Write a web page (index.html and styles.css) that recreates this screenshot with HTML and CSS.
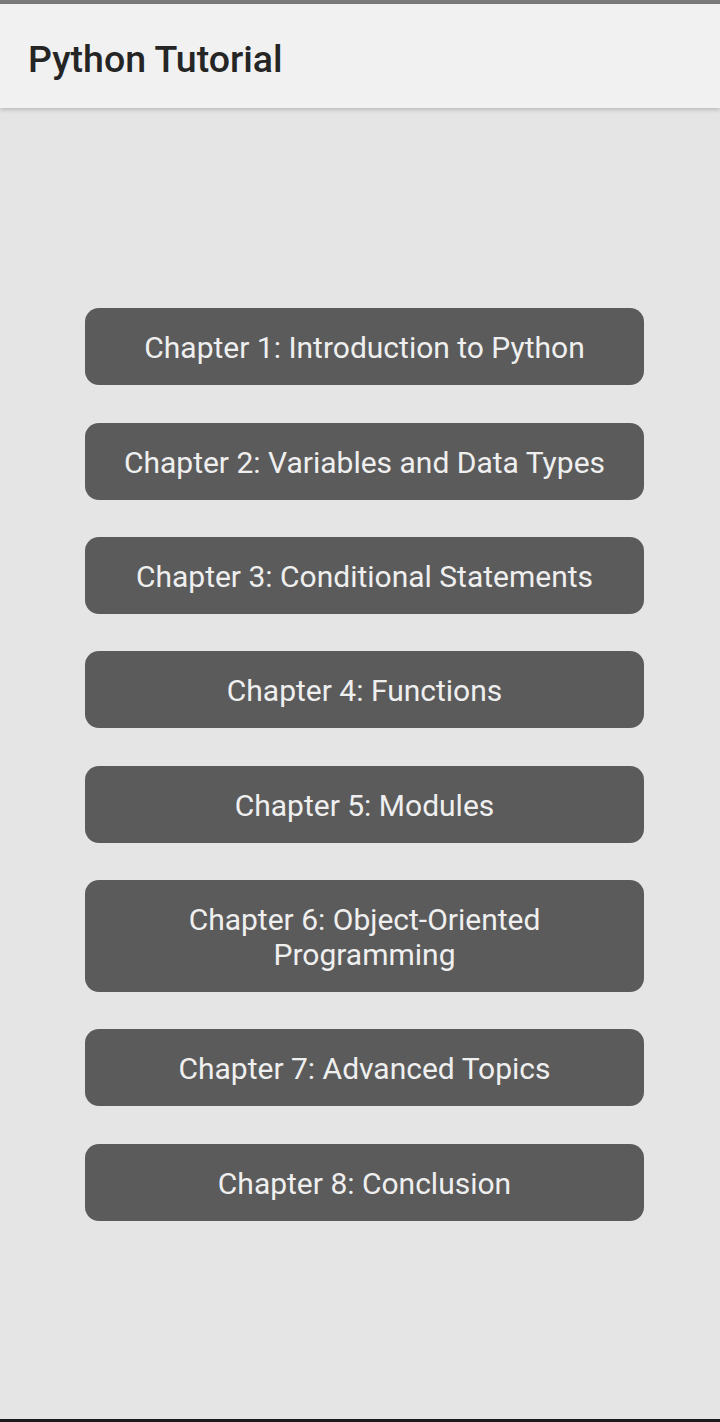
FILE: index.html
```html
<!DOCTYPE html>
<html>
<head>
<meta charset="utf-8">
<link rel="stylesheet" href="styles.css">
</head>
<body>
<div class="app">
  <div class="status"></div>
  <header class="appbar"><h1 class="title">Python Tutorial</h1></header>
  <main class="content">
    <div class="list">
      <button class="chapter">Chapter 1: Introduction to Python</button>
      <button class="chapter">Chapter 2: Variables and Data Types</button>
      <button class="chapter">Chapter 3: Conditional Statements</button>
      <button class="chapter">Chapter 4: Functions</button>
      <button class="chapter">Chapter 5: Modules</button>
      <button class="chapter">Chapter 6: Object-Oriented Programming</button>
      <button class="chapter">Chapter 7: Advanced Topics</button>
      <button class="chapter">Chapter 8: Conclusion</button>
    </div>
  </main>
  <div class="navbar"></div>
</div>
</body>
</html>
```
FILE: styles.css
```css
html, body { margin: 0; padding: 0; }
body { font-family: Roboto, "Noto Sans", sans-serif; background: #e5e5e5; }
.app { display: flex; flex-direction: column; height: 1422px; }
.status { height: 4px; background: #7a7a7a; flex: none; }
.appbar {
  height: 104px; box-sizing: border-box; flex: none; background: #f1f1f1;
  display: flex; align-items: center; padding: 5px 0 0 28px;
  box-shadow: 0 2px 4px rgba(0,0,0,0.18); position: relative; z-index: 1;
}
.title { margin: 0; font-size: 37.5px; font-weight: 500; color: #252525; }
.content { flex: 1; display: flex; align-items: center; justify-content: center; padding-top: 2px; }
.list { display: flex; flex-direction: column; gap: 37.4px; width: 559px; margin-left: 9px; }
.chapter {
  font-family: Roboto, sans-serif; font-size: 30px; color: #efefef;
  background: #5b5b5b; border: none; border-radius: 14px;
  padding: 22px 30px 20px; line-height: 35px; text-align: center;
}
.navbar { height: 3px; background: #1b1b1b; flex: none; }
```
